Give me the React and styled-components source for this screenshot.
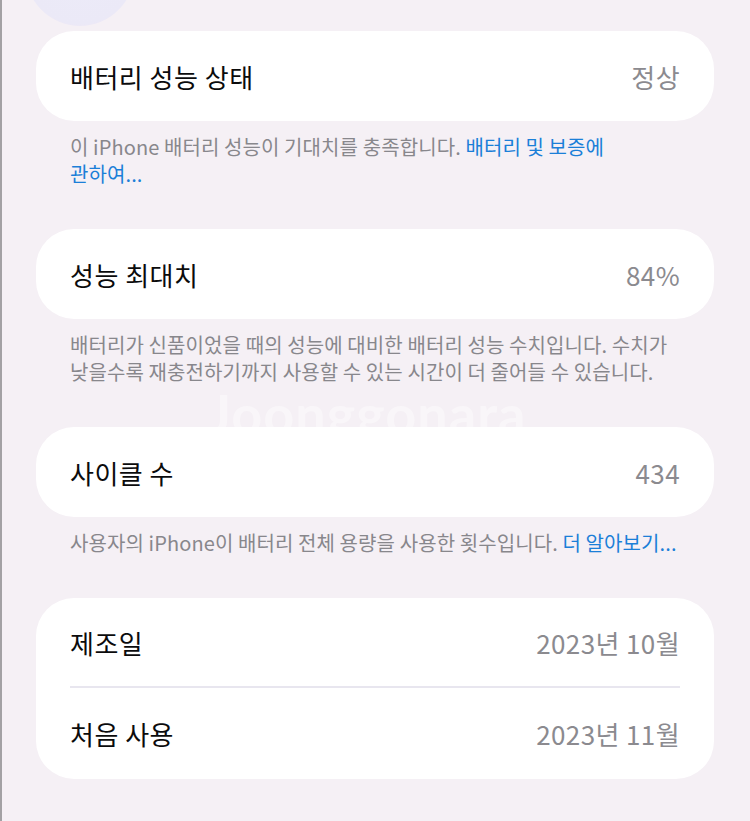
import React from "react";
import styled, { createGlobalStyle } from "styled-components";

const Global = createGlobalStyle`
  html, body {
    margin: 0;
    padding: 0;
    background: #f5f0f5;
  }
  body {
    font-family: "Noto Sans CJK KR", "Noto Sans", "Liberation Sans", sans-serif;
    -webkit-font-smoothing: antialiased;
  }
`;

const Page = styled.div`
  position: relative;
  min-height: 821px;
  box-sizing: border-box;
  padding: 31px 36px 40px 34px;
  border-left: 2px solid #a3a1a4;
  background: #f5f0f5;
  overflow: hidden;
  display: flex;
  flex-direction: column;
`;

/* blurred avatar peeking in at the top edge */
const Halo = styled.div`
  position: absolute;
  left: 22px;
  top: -92px;
  width: 112px;
  height: 118px;
  border-radius: 50%;
  background: radial-gradient(circle, #ecebf8 0%, #ebe9f7 70%, #f6e6f2 86%, rgba(245, 240, 245, 0) 100%);
  pointer-events: none;
`;

const Watermark = styled.div`
  position: absolute;
  left: 206px;
  top: 387px;
  font-family: "Lato", "Noto Sans", sans-serif;
  font-size: 54px;
  line-height: 1;
  font-weight: 700;
  letter-spacing: 1px;
  color: rgba(255, 255, 255, 0.4);
  pointer-events: none;
  user-select: none;
`;

const Section = styled.section`
  display: flex;
  flex-direction: column;
`;

const Card = styled.div`
  background: #ffffff;
  border-radius: 38px;
  display: flex;
  flex-direction: column;
`;

const Row = styled.div`
  height: ${(p) => p.$h || 90}px;
  padding: 0 34px;
  display: flex;
  align-items: center;
  justify-content: space-between;
`;

const Divider = styled.div`
  height: 2px;
  margin: 0 34px;
  background: #e8e6ef;
`;

const Label = styled.span`
  font-size: 26px;
  letter-spacing: 0.5px;
  color: #0b0b0c;
`;

const Value = styled.span`
  font-size: 26px;
  letter-spacing: 0.4px;
  color: #8b8a8f;
`;

const Note = styled.p`
  margin: 12px 34px 42px 34px;
  padding: 0;
  font-size: 20px;
  line-height: 27px;
  letter-spacing: 0.1px;
  color: #88878c;
  white-space: nowrap;
`;

const Link = styled.span`
  color: #1b7fd8;
`;

export default function App() {
  return (
    <>
      <Global />
      <Page>
        <Halo />
        <Section>
          <Card>
            <Row>
              <Label>배터리 성능 상태</Label>
              <Value>정상</Value>
            </Row>
          </Card>
          <Note>
            이 iPhone 배터리 성능이 기대치를 충족합니다. <Link>배터리 및 보증에</Link>
            <br />
            <Link>관하여...</Link>
          </Note>
        </Section>

        <Section>
          <Card>
            <Row>
              <Label>성능 최대치</Label>
              <Value>84%</Value>
            </Row>
          </Card>
          <Note>
            배터리가 신품이었을 때의 성능에 대비한 배터리 성능 수치입니다. 수치가
            <br />
            낮을수록 재충전하기까지 사용할 수 있는 시간이 더 줄어들 수 있습니다.
          </Note>
        </Section>

        <Section>
          <Card>
            <Row>
              <Label>사이클 수</Label>
              <Value>434</Value>
            </Row>
          </Card>
          <Note>
            사용자의 iPhone이 배터리 전체 용량을 사용한 횟수입니다. <Link>더 알아보기...</Link>
          </Note>
        </Section>

        <Section>
          <Card>
            <Row $h={88}>
              <Label>제조일</Label>
              <Value>2023년 10월</Value>
            </Row>
            <Divider />
            <Row $h={91}>
              <Label>처음 사용</Label>
              <Value>2023년 11월</Value>
            </Row>
          </Card>
        </Section>

        <Watermark>Joonggonara</Watermark>
      </Page>
    </>
  );
}
